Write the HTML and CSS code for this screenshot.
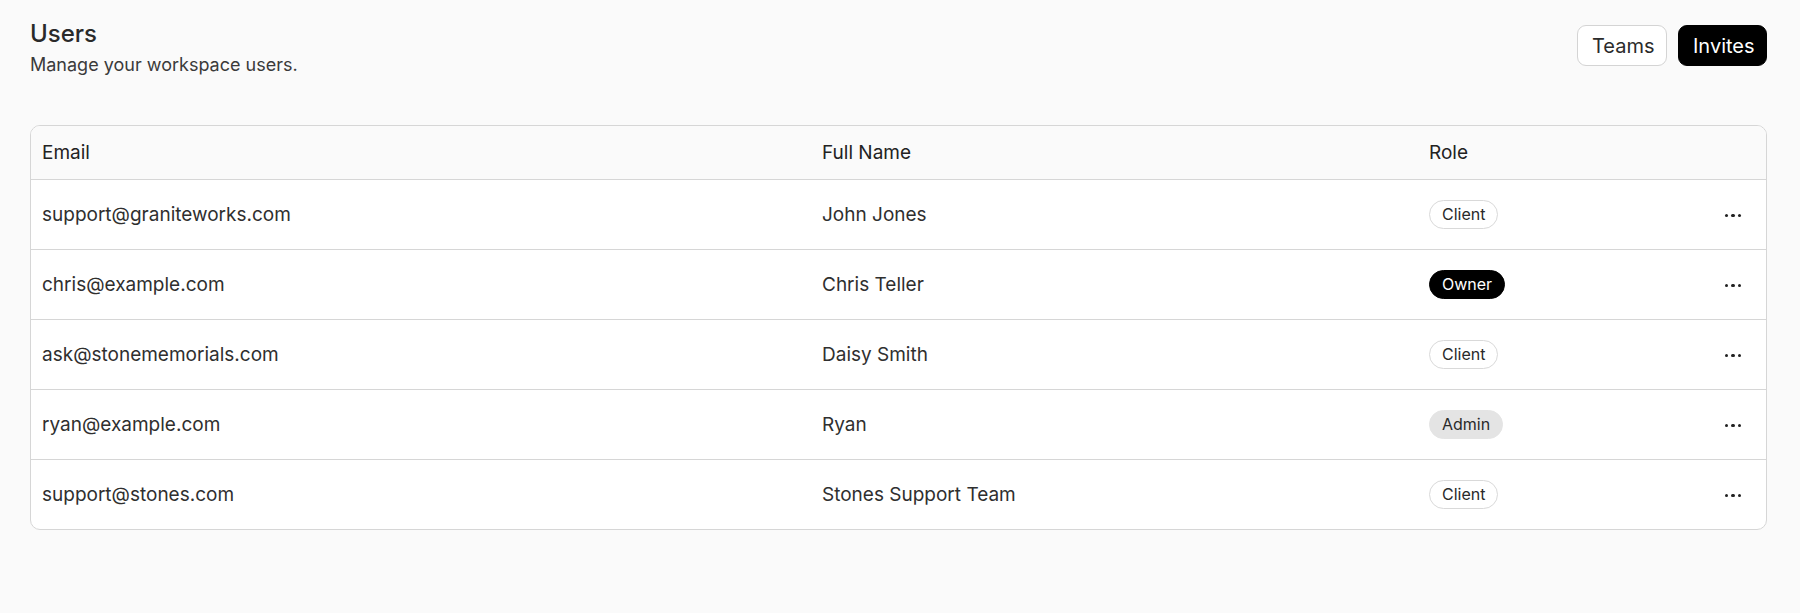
FILE: index.html
```html
<!DOCTYPE html>
<html>
<head>
<meta charset="utf-8">
<link rel="stylesheet" href="styles.css">
</head>
<body>
<div class="page">
  <header class="top">
    <div class="titles">
      <h1 class="title">Users</h1>
      <p class="subtitle">Manage your workspace users.</p>
    </div>
    <div class="actions">
      <button class="btn btn-outline">Teams</button>
      <button class="btn btn-solid">Invites</button>
    </div>
  </header>
  <div class="card">
    <table class="users">
      <colgroup>
        <col class="c-email"><col class="c-name"><col class="c-role"><col class="c-act">
      </colgroup>
      <thead>
        <tr><th>Email</th><th>Full Name</th><th>Role</th><th></th></tr>
      </thead>
      <tbody>
        <tr><td>support@graniteworks.com</td><td>John Jones</td><td><span class="badge b-client">Client</span></td><td class="act"><span class="dots"><i></i><i></i><i></i></span></td></tr>
        <tr><td>chris@example.com</td><td>Chris Teller</td><td><span class="badge b-owner">Owner</span></td><td class="act"><span class="dots"><i></i><i></i><i></i></span></td></tr>
        <tr><td>ask@stonememorials.com</td><td>Daisy Smith</td><td><span class="badge b-client">Client</span></td><td class="act"><span class="dots"><i></i><i></i><i></i></span></td></tr>
        <tr><td>ryan@example.com</td><td>Ryan</td><td><span class="badge b-admin">Admin</span></td><td class="act"><span class="dots"><i></i><i></i><i></i></span></td></tr>
        <tr><td>support@stones.com</td><td>Stones Support Team</td><td><span class="badge b-client">Client</span></td><td class="act"><span class="dots"><i></i><i></i><i></i></span></td></tr>
      </tbody>
    </table>
  </div>
</div>
</body>
</html>
```
FILE: styles.css
```css
* { box-sizing: border-box; }
html, body { margin: 0; padding: 0; }
body {
  background: #fafafa;
  font-family: Inter, "Liberation Sans", sans-serif;
  color: #2b2b2b;
}
.page { padding: 19px 33px 0 30px; }
.top { display: flex; justify-content: space-between; align-items: flex-start; }
.title { margin: 0; font-size: 24px; font-weight: 500; line-height: 30px; color: #2a2a2a; }
.subtitle { margin: 4px 0 0; font-size: 18px; line-height: 24px; color: #3a3a3a; }
.actions { display: flex; gap: 11px; padding-top: 6px; }
.btn {
  height: 41px; padding: 0 14px; border-radius: 9px; font-family: inherit;
  font-size: 20px; cursor: pointer;
}
.btn-outline { background: #fff; border: 1px solid #d4d4d4; color: #2b2b2b; width: 90px; }
.btn-solid { background: #000; border: 1px solid #000; color: #fff; width: 89px; }
.card {
  margin-top: 48px; border: 1px solid #d6d6d6; border-radius: 10px; overflow: hidden; background: #fff;
}
.users { width: 100%; border-collapse: collapse; table-layout: fixed; }
.c-email { width: 780px; }
.c-name { width: 607px; }
.c-role { width: auto; }
.c-act { width: 86px; }
.users th {
  background: #fafafa; text-align: left; font-weight: 400; font-size: 19px;
  height: 53px; padding: 0 11px; border-bottom: 1px solid #d6d6d6; color: #222;
}
.users td {
  height: 70px; padding: 0 11px; font-size: 19px; border-bottom: 1px solid #d6d6d6; color: #2f2f2f;
}
.users tbody tr:last-child td { border-bottom: none; }
.badge {
  display: inline-flex; align-items: center; height: 29px; padding: 0 12px; border-radius: 15px;
  font-size: 16px;
}
.b-client { border: 1px solid #d9d9d9; background: #fff; color: #2a2a2a; }
.b-owner { background: #000; color: #fff; border: 1px solid #000; }
.b-admin { background: #e4e4e4; color: #2a2a2a; border: 1px solid #e4e4e4; }
.act { text-align: right; padding-right: 25px !important; }
.dots { display: inline-flex; gap: 3px; vertical-align: middle; }
.dots i { width: 3.5px; height: 3.5px; border-radius: 50%; background: #222; display: block; }
```
